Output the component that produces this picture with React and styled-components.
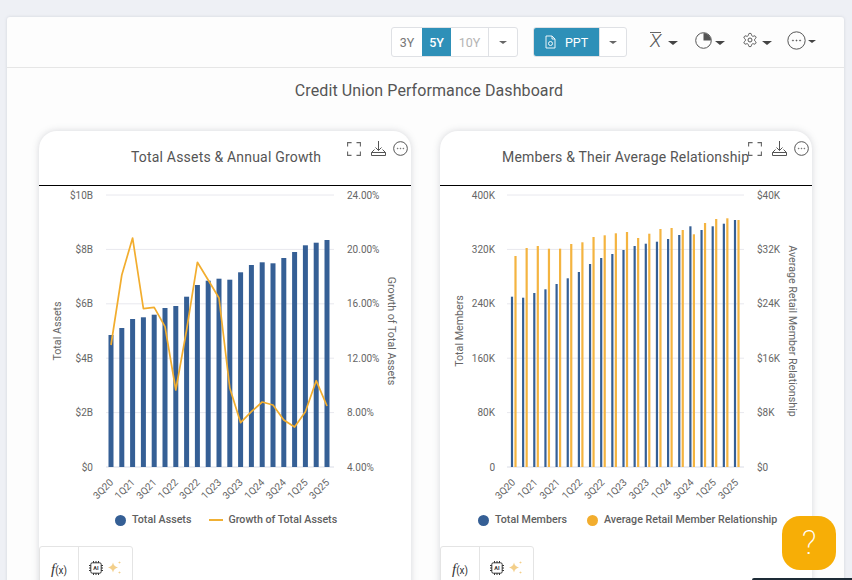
import React from "react";
import styled, { createGlobalStyle } from "styled-components";

const Global = createGlobalStyle`
  html, body { margin: 0; padding: 0; background: #eef0f5; }
  body { font-family: Roboto, "Liberation Sans", sans-serif; color: #555; }
`;

const Page = styled.div`
  width: 852px; height: 580px; overflow: hidden; position: relative;
  padding: 17px 8px 0 7px; box-sizing: border-box;
`;
const Panel = styled.main`
  background: #fdfdfd; border-radius: 3px 3px 0 0; height: 600px;
  box-shadow: 0 0 3px rgba(120,125,140,.25);
`;
const Header = styled.header`
  height: 51px; box-sizing: border-box; border-bottom: 1px solid #e6e6e6;
  display: flex; align-items: flex-start; padding: 10px 0 0 384px;
`;
const Group = styled.div`
  display: flex; flex: none; height: 30px; box-sizing: border-box; border: 1px solid #dfe1e5;
  border-radius: 3px; background: #fff; overflow: hidden; margin-right: ${p => p.$mr || 0}px;
`;
const Seg = styled.button`
  width: ${p => p.$w}px; flex: none; padding: 0; border: 0; font: 400 12.5px Roboto, sans-serif;
  border-left: ${p => (p.$div ? "1px solid #dfe1e5" : "0")};
  display: flex; align-items: center; justify-content: center; gap: 9px;
  background: ${p => (p.$active ? "#2e90b8" : "transparent")};
  color: ${p => (p.$active ? "#fff" : p.$muted ? "#b4b4b4" : "#777")};
  font-weight: ${p => (p.$bold ? 500 : 400)};
`;
const Caret = styled.i`
  display: inline-block; border-style: solid; border-color: ${p => p.$c || "#666"} transparent transparent;
  border-width: ${p => p.$s || 3}px ${p => (p.$s || 3) + 1}px 0;
  margin-top: ${p => p.$mt || 0}px;
`;
const Tool = styled.div`
  display: flex; flex: none; align-items: center; gap: ${p => p.$gap || 5}px; color: #555;
  margin: -2px 0 0 ${p => p.$ml}px; height: 30px;
`;
const BarX = styled.span`
  font: italic 300 19px Roboto, sans-serif; color: #555; border-top: 1px solid #666;
  line-height: 15px; width: 11px; display: block; text-align: center;
`;
const Heading = styled.h1`
  margin: 0; padding: 13px 0 0 7px; height: 50px; box-sizing: border-box; text-align: center; font: 400 16px/20px Roboto, sans-serif;
  color: #555; letter-spacing: .09px;
`;
const Cards = styled.div`
  display: flex; gap: 29px; padding: 13px 0 0 32px;
`;
const Card = styled.section`
  width: 372px; height: 520px; flex: none; background: #fff; border-radius: 18px 18px 0 0;
  box-shadow: 0 0 7px rgba(110,115,130,.28); display: flex; flex-direction: column; position: relative;
`;
const CardTitle = styled.div`
  height: 55px; box-sizing: border-box; border-bottom: 1px solid #000; padding: 17px 0 0 ${p => p.$pl}px;
  font: 400 14px/18px Roboto, sans-serif; color: #555; white-space: nowrap; letter-spacing: .19px;
`;
const CardIcons = styled.div`
  position: absolute; top: 10px; right: 3px; display: flex; align-items: center; gap: 7px; color: #555;
  svg:first-child { margin-right: 3px; }
`;
const Plot = styled.svg`
  display: block; width: 372px; height: 320px; flex: none;
  text { font-family: Roboto, sans-serif; font-size: 10px; fill: #666; }
`;
const Legend = styled.div`
  height: 18px; display: flex; align-items: center; padding-left: ${p => p.$pl}px; margin-top: 5px;
  font: 500 10.7px/14px Roboto, sans-serif; color: #606060;
`;
const LegendItem = styled.span`
  display: flex; align-items: center; gap: ${p => p.$gap}px; margin-right: ${p => p.$mr || 0}px; white-space: nowrap;
`;
const Dot = styled.i`
  width: 11px; height: 11px; border-radius: 50%; background: ${p => p.$c}; display: block;
`;
const Dash = styled.i`
  width: 14px; height: 2px; background: #f0b034; display: block;
`;
const Footer = styled.div`
  position: absolute; left: 0; top: 415px; width: 94px; height: 45px; box-sizing: border-box;
  border: 1px solid #e4e4e4; border-radius: 3px; display: flex; background: #fff;
`;
const FootCell = styled.div`
  height: 100%; width: ${p => p.$w}px; display: flex; align-items: flex-start; justify-content: center; gap: 5px; padding-top: 14px;
  box-sizing: border-box; border-left: ${p => (p.$div ? "1px solid #e4e4e4" : "0")}; color: #444;
`;
const Fx = styled.span`
  font: italic 400 15px/16px "Liberation Serif", serif; color: #333;
  small { font: 400 10px Roboto, sans-serif; }
`;
const Help = styled.button`
  position: absolute; left: 782px; top: 516px; width: 54px; height: 54px; border: 0; border-radius: 18px;
  background: #f7ae06; color: #fff; font: 200 33px/54px Roboto, sans-serif; padding: 0;
`;
const Strip = styled.div`
  position: absolute; left: 752px; right: 0; bottom: 0; height: 2px; background: #1d2b36; border-radius: 3px 0 0 0;
`;

const Expand = () => (
  <svg width="14" height="14" viewBox="0 0 14 14" fill="none" stroke="#666" strokeWidth="1.1">
    <path d="M.6 4.500V.6h4M9.500.6h3.900v3.900M13.400 9.500v3.900H9.500M4.500 13.400H.6V9.500" />
  </svg>
);
const Download = () => (
  <svg width="15" height="15" viewBox="0 0 15 15" fill="none" stroke="#555" strokeWidth="1">
    <path d="M7.500 0v9.500M4.500 6.500l3 3 3-3" />
    <path d="M3.500 8.500.5 11.500v3h14v-3l-3-3M.5 11.500h14" />
  </svg>
);
const Dots = ({ s = 15 }) => (
  <svg width={s} height={s} viewBox="0 0 16 16" fill="none" stroke="#555" strokeWidth={16 / s}>
    <circle cx="8" cy="8" r="7.300" />
    <circle cx="5" cy="8" r=".5" fill="#555" strokeWidth=".5" />
    <circle cx="8" cy="8" r=".5" fill="#555" strokeWidth=".5" />
    <circle cx="11" cy="8" r=".5" fill="#555" strokeWidth=".5" />
  </svg>
);
const Doc = () => (
  <svg width="11" height="14" viewBox="0 0 11 14" fill="none" stroke="#fff" strokeWidth=".9">
    <path d="M1 1h6l3 3v9H1zM7 1v3h3" />
    <circle cx="5.500" cy="8.500" r="2" />
  </svg>
);
const Pie = () => (
  <svg width="17" height="17" viewBox="0 0 17 17">
    <circle cx="8.500" cy="8.500" r="7.800" fill="none" stroke="#555" strokeWidth="1" />
    <path d="M8.500 1a7.500 7.500 0 0 1 7.500 7.500H8.500z" fill="#555" />
  </svg>
);
const Gear = () => (
  <svg width="16" height="16" viewBox="0 0 24 24" fill="none" stroke="#555" strokeWidth="1.500" strokeLinejoin="round">
    <path d="M12.220 2h-.440a2 2 0 0 0-2 2v.180a2 2 0 0 1-1 1.730l-.430.250a2 2 0 0 1-2 0l-.150-.080a2 2 0 0 0-2.730.730l-.220.380a2 2 0 0 0 .730 2.730l.150.100a2 2 0 0 1 1 1.720v.510a2 2 0 0 1-1 1.740l-.150.090a2 2 0 0 0-.730 2.730l.220.380a2 2 0 0 0 2.730.730l.150-.080a2 2 0 0 1 2 0l.430.250a2 2 0 0 1 1 1.730V20a2 2 0 0 0 2 2h.440a2 2 0 0 0 2-2v-.180a2 2 0 0 1 1-1.730l.430-.250a2 2 0 0 1 2 0l.150.080a2 2 0 0 0 2.730-.730l.220-.390a2 2 0 0 0-.730-2.730l-.150-.080a2 2 0 0 1-1-1.740v-.500a2 2 0 0 1 1-1.740l.150-.090a2 2 0 0 0 .730-2.730l-.220-.380a2 2 0 0 0-2.730-.730l-.150.080a2 2 0 0 1-2 0l-.430-.250a2 2 0 0 1-1-1.730V4a2 2 0 0 0-2-2z" />
    <circle cx="12" cy="12" r="3" />
  </svg>
);
const Chip = () => (
  <svg width="14" height="14" viewBox="0 0 14 14" fill="none" stroke="#333" strokeWidth="1">
    <rect x="1.800" y="1.800" width="10.400" height="10.400" rx="1.500" />
    <path d="M4.500 0v1.800M7 0v1.800M9.500 0v1.800M4.500 12.200V14M7 12.200V14M9.500 12.200V14M0 4.500h1.800M0 7h1.800M0 9.500h1.800M12.200 4.500H14M12.200 7H14M12.200 9.500H14" />
    <text x="7" y="9" textAnchor="middle" fill="#333" stroke="none" style={{ font: "700 5.500px Roboto, sans-serif" }}>AI</text>
  </svg>
);
const Sparkles = () => (
  <svg width="14" height="14" viewBox="0 0 14 14" fill="#f3cf8a">
    <path d="M5 1.500c.7 3 2 4.300 5 5-3 .7-4.300 2-5 5-.7-3-2-4.300-5-5 3-.7 4.300-2 5-5z" />
    <path d="M11.500 0c.2 1 .6 1.400 1.500 1.500-.9.200-1.300.5-1.500 1.500-.2-1-.6-1.300-1.500-1.500.9-.1 1.300-.5 1.500-1.500zM11.500 10c.2 1 .6 1.400 1.500 1.500-.9.200-1.300.5-1.500 1.500-.2-1-.6-1.300-1.500-1.500.9-.1 1.300-.5 1.500-1.500z" />
  </svg>
);

const quarters = ["3Q20","1Q21","3Q21","1Q22","3Q22","1Q23","3Q23","1Q24","3Q24","1Q25","3Q25"];
const baseY = 281; // plot-space y of the zero line (467 on page)
const off = 186;   // page y of the plot's top

const assetTops = [335,328,319,317.3,314.7,308,306,296.7,285,280.7,278.7,279.7,272.3,265,262.3,263.3,258,252,245.3,242.7,240];
const growth = [345,275,238,308.7,307.3,326.700,390,330,262.3,280,298,388,422.700,411.700,402,405,420,427,411.700,380.700,406];
const memberTops = [296.7,297.7,293,289.3,284,278.3,272,264,258,254,250,246,243.7,241.7,239,235,226.3,230,226.3,223.7,220];
const relTops = [256,248,246,248.7,248.7,244,242.3,237,235.3,233.3,232,238,233.7,229,228,230,234.3,223,219,218.3,220];

function Axes({ x0, x1, left, right, lx, rx, ltitle, rtitle, ltx, rtx, first, step }) {
  return (
    <>
      {[0,1,2,3,4,5].map(i => {
        const y = baseY - i * 54.4;
        return (
          <g key={i}>
            <line x1={x0} x2={x1} y1={y} y2={y} stroke={i === 0 ? "#d9dce6" : "#e8e8ee"} strokeWidth="1" />
            <text x={lx} y={y + 3.500} textAnchor="end">{left[i]}</text>
            <text x={rx} y={y + 3.500}>{right[i]}</text>
          </g>
        );
      })}
      <text transform={`translate(${ltx} 145) rotate(-90)`} textAnchor="middle" style={{ fontSize: 10.700 }}>{ltitle}</text>
      <text transform={`translate(${rtx} 145) rotate(90)`} textAnchor="middle" style={{ fontSize: 10.700 }}>{rtitle}</text>
      {quarters.map((q, i) => (
        <text key={q} transform={`translate(${first + i * step * 2 + 3} 297) rotate(-45)`} textAnchor="end">{q}</text>
      ))}
    </>
  );
}

function AssetsChart() {
  const ox = 39;
  const xs = i => 111 - ox + i * 10.8;
  return (
    <Plot viewBox="0 0 372 320">
      <Axes x0={67} x1={295} lx={54} rx={308} ltx={22} rtx={349} first={72} step={10.8}
        ltitle="Total Assets" rtitle="Growth of Total Assets"
        left={["$0","$2B","$4B","$6B","$8B","$10B"]}
        right={["4.00%","8.00%","12.00%","16.00%","20.00%","24.00%"]} />
      {assetTops.map((t, i) => (
        <rect key={i} x={xs(i) - 2.500} y={t - off} width="5" height={baseY - (t - off)} fill="#355f95" />
      ))}
      <polyline fill="none" stroke="#f2ad2e" strokeWidth="1.700" strokeLinejoin="round"
        points={growth.map((y, i) => `${xs(i)},${y - off}`).join(" ")} />
    </Plot>
  );
}

function MembersChart() {
  const ox = 440;
  const xs = i => 512 - ox + i * 11.15;
  return (
    <Plot viewBox="0 0 372 320">
      <Axes x0={67} x1={304} lx={55} rx={317} ltx={23} rtx={349} first={73} step={11.15}
        ltitle="Total Members" rtitle="Average Retail Member Relationship"
        left={["0","80K","160K","240K","320K","400K"]}
        right={["$0","$8K","$16K","$24K","$32K","$40K"]} />
      {memberTops.map((t, i) => (
        <rect key={i} x={xs(i) - 1.100} y={t - off} width="2.200" height={baseY - (t - off)} fill="#355f95" />
      ))}
      {relTops.map((t, i) => (
        <rect key={i} x={xs(i) + 2.400} y={t - off} width="2.200" height={baseY - (t - off)} fill="#f4b440" />
      ))}
    </Plot>
  );
}

function ChartCard({ title, pl, children, legend, lpl }) {
  return (
    <Card>
      <CardTitle $pl={pl}>{title}</CardTitle>
      <CardIcons><Expand /><Download /><Dots /></CardIcons>
      {children}
      <Legend $pl={lpl}>{legend}</Legend>
      <Footer>
        <FootCell $w={38}><Fx>f<small>(x)</small></Fx></FootCell>
        <FootCell $w={54} $div><Chip /><Sparkles /></FootCell>
      </Footer>
    </Card>
  );
}

export default function App() {
  return (
    <Page>
      <Global />
      <Panel>
        <Header>
          <Group $mr={15}>
            <Seg $w={30}>3Y</Seg>
            <Seg $w={29} $active $bold>5Y</Seg>
            <Seg $w={37} $muted>10Y</Seg>
            <Seg $w={29} $div><Caret /></Seg>
          </Group>
          <Group>
            <Seg $w={65} $active><Doc />PPT</Seg>
            <Seg $w={27} $div><Caret /></Seg>
          </Group>
          <Tool $ml={23} $gap={7}><BarX>X</BarX><Caret $s={4} $c="#444" $mt={6} /></Tool>
          <Tool $ml={17} $gap={3}><Pie /><Caret $s={4} $c="#444" $mt={6} /></Tool>
          <Tool $ml={17} $gap={4}><Gear /><Caret $s={4} $c="#444" $mt={6} /></Tool>
          <Tool $ml={15} $gap={2}><Dots s={19} /><Caret $c="#444" $mt={2} /></Tool>
        </Header>
        <Heading>Credit Union Performance Dashboard</Heading>
        <Cards>
          <ChartCard title="Total Assets & Annual Growth" pl={92} lpl={76} legend={<>
            <LegendItem $gap={6} $mr={18}><Dot $c="#355f95" />Total Assets</LegendItem>
            <LegendItem $gap={5}><Dash />Growth of Total Assets</LegendItem>
          </>}><AssetsChart /></ChartCard>
          <ChartCard title="Members & Their Average Relationship" pl={62} lpl={38} legend={<>
            <LegendItem $gap={6} $mr={20}><Dot $c="#355f95" />Total Members</LegendItem>
            <LegendItem $gap={6}><Dot $c="#f2ad2e" />Average Retail Member Relationship</LegendItem>
          </>}><MembersChart /></ChartCard>
        </Cards>
      </Panel>
      <Help>?</Help>
      <Strip />
    </Page>
  );
}
